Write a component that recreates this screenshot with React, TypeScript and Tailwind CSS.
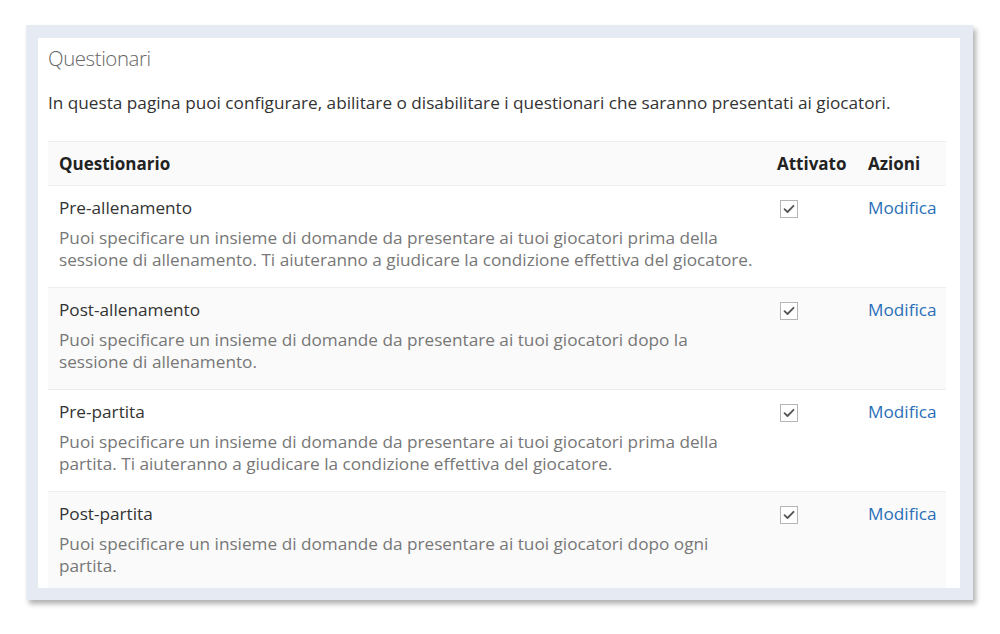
import React from "react";

const rows = [
  {
    title: "Pre-allenamento",
    desc: "Puoi specificare un insieme di domande da presentare ai tuoi giocatori prima della sessione di allenamento. Ti aiuteranno a giudicare la condizione effettiva del giocatore.",
  },
  {
    title: "Post-allenamento",
    desc: "Puoi specificare un insieme di domande da presentare ai tuoi giocatori dopo la sessione di allenamento.",
  },
  {
    title: "Pre-partita",
    desc: "Puoi specificare un insieme di domande da presentare ai tuoi giocatori prima della partita. Ti aiuteranno a giudicare la condizione effettiva del giocatore.",
  },
  {
    title: "Post-partita",
    desc: "Puoi specificare un insieme di domande da presentare ai tuoi giocatori dopo ogni partita.",
  },
];

function Check() {
  return (
    <div className="w-[18px] h-[18px] border border-[#b5b5b5] bg-white flex items-center justify-center">
      <svg width="12" height="10" viewBox="0 0 12 10">
        <path d="M1.5 5.2 L4.5 8 L10.5 1.8" fill="none" stroke="#555" strokeWidth="1.8" strokeLinecap="round" strokeLinejoin="round" />
      </svg>
    </div>
  );
}

export default function App() {
  return (
    <div className="w-[1000px] h-[634px] bg-white overflow-hidden" style={{ fontFamily: '"Open Sans", sans-serif' }}>
      <div className="ml-[26px] mt-[25px] w-[947px] h-[575px] bg-[#e6ebf3] pt-[13px] pl-[12px] pr-[13px] pb-[12px] shadow-[3px_4px_5px_rgba(0,0,0,0.3)]">
        <div className="bg-white h-full overflow-hidden pl-[10px] pr-[14px]">
          <div className="pt-[7px] text-[20.4px] font-light text-[#666] leading-[26px] tracking-[-0.4px]">Questionari</div>
          <p className="mt-[21px] text-[17.2px] text-[#333] leading-[22px]">
            In questa pagina puoi configurare, abilitare o disabilitare i questionari che saranno presentati ai giocatori.
          </p>
          <div className="mt-[27px] border-t border-[#eee]">
            <div className="flex h-[44px] items-center bg-[#fafafa] border-b border-[#eee] text-[17px] font-bold text-[#222]">
              <div className="flex-1 pl-[11px]">Questionario</div>
              <div className="w-[91px]">Attivato</div>
              <div className="w-[78px]">Azioni</div>
            </div>
            {rows.map((r, i) => (
              <div
                key={r.title}
                className={`flex h-[102px] border-b border-[#eee] ${i % 2 === 1 ? "bg-[#fafafa]" : "bg-white"}`}
              >
                <div className="flex-1 pl-[11px] pt-[11px]">
                  <div className="text-[17.2px] text-[#333] leading-[22px]">{r.title}</div>
                  <div className="mt-[8px] text-[17.2px] text-[#777] leading-[22px] w-[700px]">{r.desc}</div>
                </div>
                <div className="w-[91px] pt-[14px] pl-[3px]">
                  <Check />
                </div>
                <div className="w-[78px] pt-[11px] text-[17.2px] leading-[22px] text-[#2a6fb8]">Modifica</div>
              </div>
            ))}
          </div>
        </div>
      </div>
    </div>
  );
}
